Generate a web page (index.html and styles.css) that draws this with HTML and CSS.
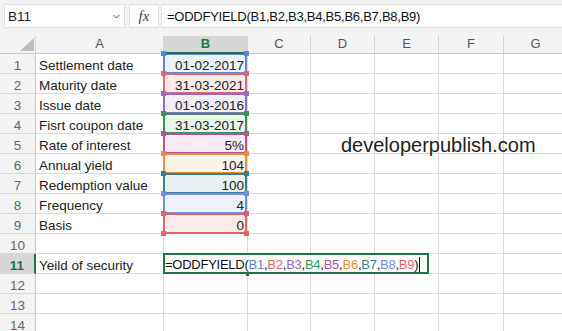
FILE: index.html
```html
<!DOCTYPE html>
<html lang="en">
<head>
    <meta charset="UTF-8">
    <meta name="viewport" content="width=device-width, initial-scale=1.0">
    <title>ODDFYIELD</title>
    <link rel="stylesheet" href="styles.css">
</head>
<body>

    <!-- formula bar -->
    <div class="bar">
        <div class="name-box">
            <span>B11</span>
            <svg class="chevron" width="7" height="5" viewBox="0 0 7 5"><polyline points="0.5,1 3.5,4 6.5,1" fill="none" stroke="#555" stroke-width="1"/></svg>
        </div>
        <div class="fx-box">fx</div>
        <div class="formula">=ODDFYIELD(B1,B2,B3,B4,B5,B6,B7,B8,B9)</div>
    </div>

    <!-- sheet -->
    <div class="sheet">
        <div class="corner"><svg width="35" height="17"><polygon points="20,15 34,15 34,2" fill="#bdbdbd"/></svg></div>
        <div class="ch">A</div>
        <div class="ch active">B</div>
        <div class="ch">C</div>
        <div class="ch">D</div>
        <div class="ch">E</div>
        <div class="ch">F</div>
        <div class="ch">G</div>

        <div class="rh">1</div><div class="c">Settlement date</div><div class="c num ref r1">01-02-2017</div><div class="c"></div><div class="c"></div><div class="c"></div><div class="c"></div><div class="c"></div>
        <div class="rh">2</div><div class="c">Maturity date</div><div class="c num ref r2">31-03-2021</div><div class="c"></div><div class="c"></div><div class="c"></div><div class="c"></div><div class="c"></div>
        <div class="rh">3</div><div class="c">Issue date</div><div class="c num ref r3">01-03-2016</div><div class="c"></div><div class="c"></div><div class="c"></div><div class="c"></div><div class="c"></div>
        <div class="rh">4</div><div class="c">Fisrt coupon date</div><div class="c num ref r4">31-03-2017</div><div class="c"></div><div class="c"></div><div class="c"></div><div class="c"></div><div class="c"></div>
        <div class="rh">5</div><div class="c">Rate of interest</div><div class="c num ref r5">5%</div><div class="c"></div><div class="c"></div><div class="c"></div><div class="c"></div><div class="c"></div>
        <div class="rh">6</div><div class="c">Annual yield</div><div class="c num ref r6">104</div><div class="c"></div><div class="c"></div><div class="c"></div><div class="c"></div><div class="c"></div>
        <div class="rh">7</div><div class="c">Redemption value</div><div class="c num ref r7">100</div><div class="c"></div><div class="c"></div><div class="c"></div><div class="c"></div><div class="c"></div>
        <div class="rh">8</div><div class="c">Frequency</div><div class="c num ref r8">4</div><div class="c"></div><div class="c"></div><div class="c"></div><div class="c"></div><div class="c"></div>
        <div class="rh">9</div><div class="c">Basis</div><div class="c num ref r9">0</div><div class="c"></div><div class="c"></div><div class="c"></div><div class="c"></div><div class="c"></div>
        <div class="rh">10</div><div class="c"></div><div class="c"></div><div class="c"></div><div class="c"></div><div class="c"></div><div class="c"></div><div class="c"></div>
        <div class="rh active">11</div><div class="c">Yeild of security</div>
        <div class="c editing">
            <div class="edit">=ODDFYIELD(<span class="k1">B1</span>,<span class="k2">B2</span>,<span class="k3">B3</span>,<span class="k4">B4</span>,<span class="k5">B5</span>,<span class="k6">B6</span>,<span class="k7">B7</span>,<span class="k8">B8</span>,<span class="k9">B9</span>)<span class="caret"></span></div>
        </div>
        <div class="c"></div><div class="c"></div><div class="c"></div><div class="c"></div><div class="c"></div>
        <div class="rh">12</div><div class="c"></div><div class="c"></div><div class="c"></div><div class="c"></div><div class="c"></div><div class="c"></div><div class="c"></div>
        <div class="rh">13</div><div class="c"></div><div class="c"></div><div class="c"></div><div class="c"></div><div class="c"></div><div class="c"></div><div class="c"></div>
        <div class="rh">14</div><div class="c"></div><div class="c"></div><div class="c"></div><div class="c"></div><div class="c"></div><div class="c"></div><div class="c"></div>
    </div>

    <div class="watermark">developerpublish.com</div>

</body>
</html>
```

FILE: styles.css
```css
* {
    box-sizing: border-box;
}
body {
    margin: 0;
    width: 562px;
    height: 331px;
    overflow: hidden;
    position: relative;
    background: #fff;
    font-family: "Liberation Sans", Arial, sans-serif;
    color: #222;
}

/* formula bar */
.bar {
    height: 36px;
    padding: 4px 0 0 4px;
    background: #f3f3f3;
    display: flex;
}
.name-box, .fx-box, .formula {
    height: 24px;
    background: #fff;
    border: 1px solid #e1e1e1;
    display: flex;
    align-items: center;
}
.name-box {
    width: 121px;
    justify-content: space-between;
    padding: 0 4px 0 3px;
    font-size: 13.5px;
}
.fx-box {
    width: 30px;
    margin-left: 4px;
    justify-content: center;
    font-family: "Liberation Serif", serif;
    font-style: italic;
    font-size: 15px;
    color: #444;
}
.formula {
    flex: 1;
    margin-left: 2px;
    border-right: none;
    padding-left: 5px;
    font-size: 13px;
    letter-spacing: -0.25px;
    color: #111;
}

/* grid */
.sheet {
    display: grid;
    grid-template-columns: 36px 128px 84px 63px 64px 64px 65px 64px;
    grid-template-rows: 18px;
    grid-auto-rows: 20px;
    width: 568px;
}
.corner, .ch {
    background: #f3f3f3;
    border-right: 1px solid #d4d4d4;
    border-bottom: 1px solid #c8c8c8;
}
.ch {
    text-align: center;
    font-size: 13px;
    line-height: 16px;
    color: #555;
}
.ch.active {
    position: relative;
    z-index: 2;
    background: #d6d6d6;
    color: #217346;
    font-weight: bold;
    border-bottom: 2px solid #217346;
}
.rh {
    background: #f3f3f3;
    border-right: 1px solid #c8c8c8;
    border-bottom: 1px solid #d8d8d8;
    text-align: center;
    font-size: 13.5px;
    line-height: 19px;
    padding-top: 2px;
    color: #666;
}
.rh.active {
    background: #d6d6d6;
    color: #217346;
    font-weight: bold;
    border-right: 2px solid #217346;
}
.c {
    border-right: 1px solid #dadada;
    border-bottom: 1px solid #dadada;
    font-size: 13.5px;
    line-height: 19px;
    padding: 2px 3px 0;
    white-space: nowrap;
}
.num {
    text-align: right;
}

/* range references */
.ref {
    position: relative;
    background: var(--bg);
}
.ref::before {
    content: "";
    position: absolute;
    top: -1px;
    left: -1px;
    right: 0;
    bottom: -1px;
    border: 2px solid var(--c);
    z-index: 1;
}
.ref::after {
    content: "";
    position: absolute;
    top: -3px;
    left: -3px;
    right: -2px;
    bottom: -3px;
    z-index: 3;
    background:
        linear-gradient(var(--c), var(--c)) left top / 5px 5px no-repeat,
        linear-gradient(var(--c), var(--c)) right top / 5px 5px no-repeat,
        linear-gradient(var(--c), var(--c)) left bottom / 5px 5px no-repeat,
        linear-gradient(var(--c), var(--c)) right bottom / 5px 5px no-repeat;
}
.r1 { --c: #5f86cf; --bg: #eef2fb; }
.r2 { --c: #dd6a6e; --bg: #fbeaea; }
.r3 { --c: #8f6cc6; --bg: #f2eefa; }
.r4 { --c: #3a9455; --bg: #e9f4ec; }
.r5 { --c: #b4529a; --bg: #f8ebf4; }
.r6 { --c: #e3913d; --bg: #fdf3e7; }
.r7 { --c: #3a7f90; --bg: #e8f0f2; }
.r8 { --c: #6f8fe0; --bg: #eef2fc; }
.r9 { --c: #df6565; --bg: #fdeaea; }

/* cell in edit mode */
.editing {
    position: relative;
}
.edit {
    position: absolute;
    top: -1px;
    left: -1px;
    width: 266px;
    height: 21px;
    z-index: 4;
    background: #fff;
    border: 2px solid #217346;
    font-size: 13px;
    letter-spacing: -0.25px;
    line-height: 19px;
    padding-top: 0;
    color: #111;
}
.edit::after {
    content: "";
    position: absolute;
    left: 81px;
    bottom: -4px;
    width: 3px;
    height: 3px;
    background: #217346;
}
.caret {
    display: inline-block;
    width: 1px;
    height: 15px;
    margin-left: 1px;
    vertical-align: -3px;
    background: #111;
}
.k1 { color: #5f86cf; }
.k2 { color: #dd6a6e; }
.k3 { color: #8f6cc6; }
.k4 { color: #3a9455; }
.k5 { color: #b4529a; }
.k6 { color: #e3913d; }
.k7 { color: #3a7f90; }
.k8 { color: #6f8fe0; }
.k9 { color: #df6565; }

.watermark {
    position: absolute;
    left: 341px;
    top: 135px;
    font-size: 20px;
    line-height: 20px;
    color: #222;
}
```
